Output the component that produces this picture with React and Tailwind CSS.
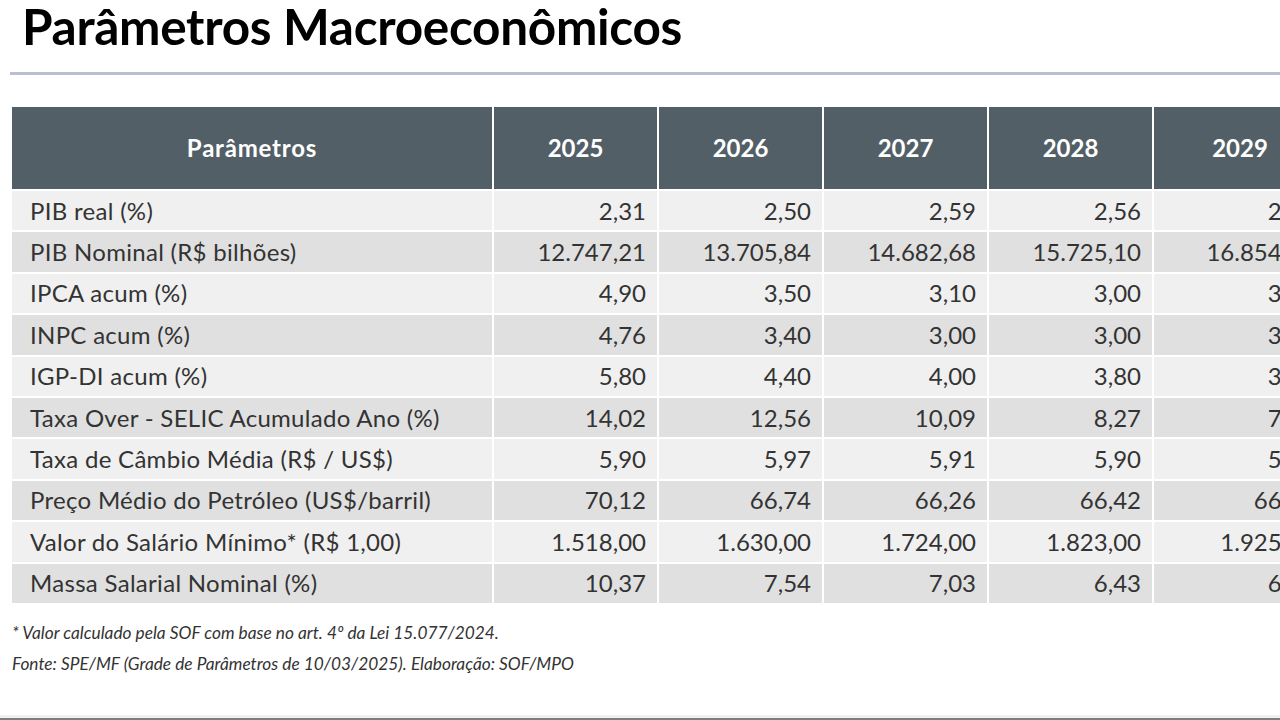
const years = ["2025", "2026", "2027", "2028", "2029"];

const rows = [
  ["PIB real (%)", "2,31", "2,50", "2,59", "2,56", "2,50"],
  ["PIB Nominal (R$ bilhões)", "12.747,21", "13.705,84", "14.682,68", "15.725,10", "16.854,17"],
  ["IPCA acum (%)", "4,90", "3,50", "3,10", "3,00", "3,00"],
  ["INPC acum (%)", "4,76", "3,40", "3,00", "3,00", "3,00"],
  ["IGP-DI acum (%)", "5,80", "4,40", "4,00", "3,80", "3,80"],
  ["Taxa Over - SELIC Acumulado Ano (%)", "14,02", "12,56", "10,09", "8,27", "7,50"],
  ["Taxa de Câmbio Média (R$ / US$)", "5,90", "5,97", "5,91", "5,90", "5,90"],
  ["Preço Médio do Petróleo (US$/barril)", "70,12", "66,74", "66,26", "66,42", "66,42"],
  ["Valor do Salário Mínimo* (R$ 1,00)", "1.518,00", "1.630,00", "1.724,00", "1.823,00", "1.925,00"],
  ["Massa Salarial Nominal (%)", "10,37", "7,54", "7,03", "6,43", "6,43"],
];

export default function App() {
  return (
    <div
      className="w-[1280px] h-[720px] overflow-hidden bg-white flex flex-col text-[#333]"
      style={{ fontFamily: "Lato, 'Open Sans', sans-serif" }}
    >
      <div className="h-[72px] overflow-hidden">
        <h1 className="pl-[22px] text-[49.5px] font-bold text-black leading-[60px] -mt-[4px] tracking-[-0.3px]">
          Parâmetros Macroeconômicos
        </h1>
      </div>
      <div className="ml-[10px] h-[3px] bg-[#b8bfcf]" />

      <div className="pl-[12px] pt-[32px] overflow-hidden">
        <div className="grid grid-cols-[480px_163px_163px_163px_163px_172px] gap-[2px] w-[1320px]">
          <div className="h-[82px] bg-[#535f67] text-white font-bold text-[24px] tracking-[0.8px] flex items-center justify-center">
            Parâmetros
          </div>
          {years.map((y) => (
            <div
              key={y}
              className="h-[82px] bg-[#535f67] text-white font-bold text-[24px] flex items-center justify-center"
            >
              {y}
            </div>
          ))}

          {rows.map((r, i) => {
            const bg = i % 2 === 0 ? "bg-[#f0f0f0]" : "bg-[#e0e0e0]";
            return [
              <div
                key={r[0]}
                className={`h-[39.4px] ${bg} text-[24px] tracking-[0.3px] flex items-center pl-[18px] whitespace-nowrap`}
              >
                {r[0]}
              </div>,
              ...r.slice(1).map((v, j) => (
                <div
                  key={r[0] + j}
                  className={`h-[39.4px] ${bg} text-[24px] flex items-center justify-end pr-[11px] whitespace-nowrap`}
                >
                  {v}
                </div>
              )),
            ];
          })}
        </div>
      </div>

      <div className="pl-[12px] pt-[20px] italic text-[17.3px] text-[#333] leading-[20px]">
        <p>* Valor calculado pela SOF com base no art. 4º da Lei 15.077/2024.</p>
        <p className="mt-[11px]">Fonte: SPE/MF (Grade de Parâmetros de 10/03/2025). Elaboração: SOF/MPO</p>
      </div>

      <div className="mt-auto h-[3px] bg-[#f0f0f0]" />
      <div className="h-[2px] bg-[#7f7f7f]" />
    </div>
  );
}
